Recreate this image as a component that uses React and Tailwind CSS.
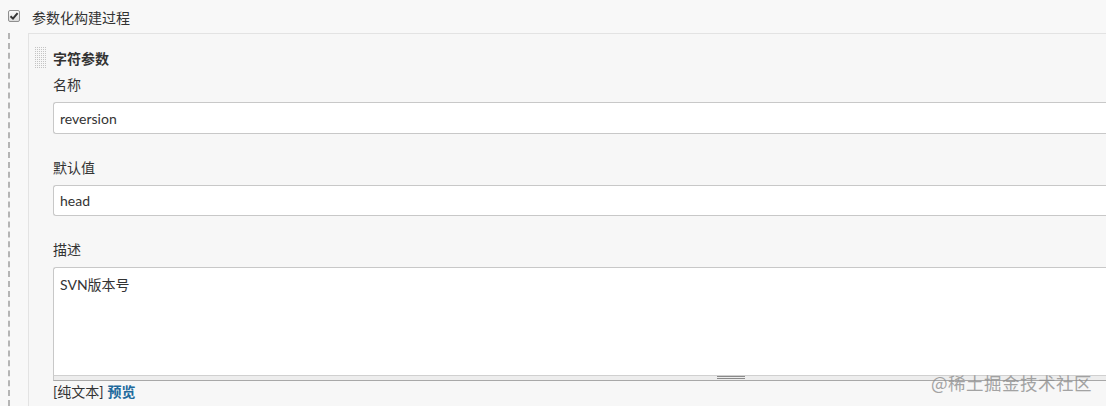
import React from "react";

const font = { fontFamily: 'Lato,"Noto Sans CJK SC",sans-serif' };

function Label({ children, className = "" }) {
  return (
    <div className={`h-[20px] flex items-center text-[14px] text-[#333] ${className}`}>{children}</div>
  );
}

export default function App() {
  return (
    <div
      className="relative w-[1106px] h-[406px] overflow-hidden bg-[#f8f8f8] text-[14px] text-[#333]"
      style={font}
    >
      {/* top row */}
      <div className="h-[33px] flex items-start pt-[8px]">
        <div className="ml-[8px] mt-[2px] w-[12px] h-[12px] rounded-[2px] border border-[#8f8f8f] bg-gradient-to-b from-[#fafafa] to-[#dcdcdc] flex items-center justify-center">
          <svg width="10" height="10" viewBox="0 0 10 10">
            <path d="M1.5 5.2 L4 7.6 L8.6 2.2" fill="none" stroke="#333" strokeWidth="2" />
          </svg>
        </div>
        <div className="ml-[12px] h-[18px] flex items-center text-[14px] text-[#333]">参数化构建过程</div>
      </div>

      <div className="flex h-[373px]">
        {/* dashed guide */}
        <div className="w-[28px] shrink-0">
          <div className="ml-[8px] h-full border-l-2 border-dashed border-[#b5b5b5]" />
        </div>

        {/* panel */}
        <div className="flex-1 bg-[#f7f7f7] border-t border-l border-[#e3e3e3] flex">
          <div className="w-[24px] shrink-0 pl-[6px] pt-[13px]">
            <svg width="11" height="21" viewBox="0 0 11 21">
              <defs>
                <pattern id="dots" width="2" height="2" patternUnits="userSpaceOnUse">
                  <rect x="0" y="0" width="1" height="1" fill="#c4c4c4" />
                </pattern>
              </defs>
              <rect x="0" y="0" width="11" height="21" fill="url(#dots)" />
            </svg>
          </div>

          <div className="flex-1 pt-[14px]">
            <Label className="font-bold text-[#222]">字符参数</Label>
            <Label className="mt-[6px]">名称</Label>
            <div className="mt-[8px] h-[32px] bg-white border border-[#c8c8c8] border-r-0 rounded-l-[3px] flex items-center pl-[6px] text-[14px] text-[#333]">
              reversion
            </div>
            <Label className="mt-[23px]">默认值</Label>
            <div className="mt-[8px] h-[31px] bg-white border border-[#c8c8c8] border-r-0 rounded-l-[3px] flex items-center pl-[6px] text-[14px] text-[#333]">
              head
            </div>
            <Label className="mt-[23px]">描述</Label>
            <div className="mt-[8px] h-[108px] bg-white border border-[#c8c8c8] border-r-0 border-b-0 rounded-tl-[3px] pl-[6px] pt-[6px] text-[14px] text-[#333]">
              SVN版本号
            </div>
            <div className="relative h-[6px] bg-[#ededed] border-t border-[#d0d0d0] border-b border-b-[#a8a8a8] border-l border-l-[#c8c8c8]">
              <div className="absolute left-[663px] top-[0px] w-[28px] h-[3px] border-t border-b border-[#8a8a8a]" />
            </div>
            <div className="h-[20px] flex items-center text-[14px] text-[#333]">
              <span>[纯文本]</span>
              <span className="ml-[4px] font-bold text-[#20699c]">预览</span>
            </div>
          </div>
        </div>
      </div>

      {/* watermark */}
      <div
        className="absolute left-[931px] top-[370px] text-[17.5px] text-[#8f8f8f] opacity-80 tracking-[0.5px]"
        style={{ fontFamily: '"Noto Sans CJK SC",sans-serif' }}
      >
        @稀土掘金技术社区
      </div>
    </div>
  );
}
